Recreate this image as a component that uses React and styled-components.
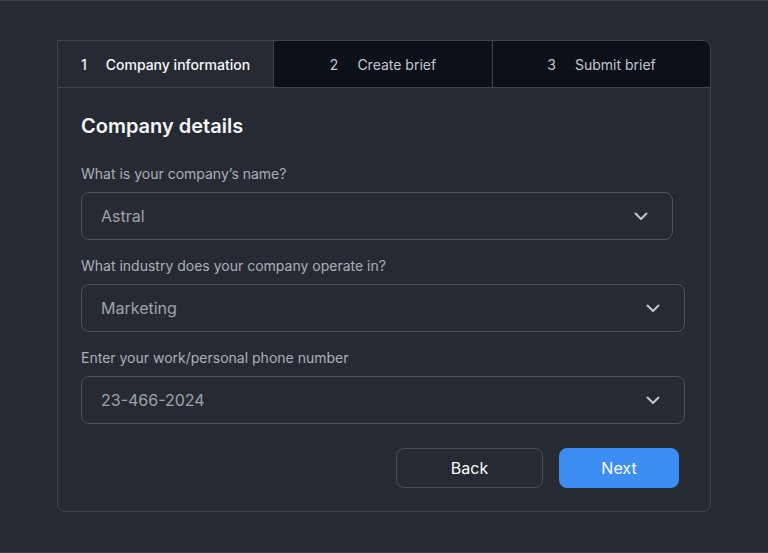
import React from "react";
import styled, { createGlobalStyle } from "styled-components";

const GlobalStyle = createGlobalStyle`
  html, body {
    margin: 0;
    padding: 0;
    background: #262b33;
  }
  body {
    font-family: Inter, "Noto Sans", sans-serif;
    -webkit-font-smoothing: antialiased;
  }
`;

const steps = [
  { n: 1, label: "Company information", active: true },
  { n: 2, label: "Create brief" },
  { n: 3, label: "Submit brief" },
];

const fields = [
  { label: "What is your company’s name?", value: "Astral", width: 592 },
  { label: "What industry does your company operate in?", value: "Marketing", width: 604 },
  { label: "Enter your work/personal phone number", value: "23-466-2024", width: 604 },
];

const Chevron = () => (
  <svg width="14" height="9" viewBox="0 0 14 9" fill="none">
    <path d="M1.5 1.5 7 7l5.5-5.5" stroke="#c3c7cd" strokeWidth="2" strokeLinecap="round" strokeLinejoin="round" />
  </svg>
);

const App = () => {
  return (
    <Screen>
      <GlobalStyle />
      <Card>
        <Tabs>
          {steps.map((s) => (
            <Tab key={s.n} $active={s.active}>
              <span>{s.n}</span>
              <span>{s.label}</span>
            </Tab>
          ))}
        </Tabs>
        <Body>
          <Title>Company details</Title>
          {fields.map((f, i) => (
            <Field key={f.label} $first={i === 0}>
              <Label>{f.label}</Label>
              <Select $width={f.width}>
                <span>{f.value}</span>
                <Chevron />
              </Select>
            </Field>
          ))}
          <Actions>
            <Button>Back</Button>
            <Button $primary>Next</Button>
          </Actions>
        </Body>
      </Card>
    </Screen>
  );
};

export default App;

const Screen = styled.div`
  box-sizing: border-box;
  height: 553px;
  border-top: 1px solid #3b4047;
  border-bottom: 1px solid #3b4047;
  padding: 39px 0 0 57px;
`;

const Card = styled.div`
  width: 654px;
  height: 472px;
  box-sizing: border-box;
  border: 1px solid #40464e;
  border-radius: 0 8px 8px 8px;
  overflow: hidden;
  display: flex;
  flex-direction: column;
`;

const Tabs = styled.div`
  display: grid;
  grid-template-columns: 215px 219px 1fr;
  height: 47px;
  border-bottom: 1px solid #40464e;
`;

const Tab = styled.div`
  display: flex;
  align-items: center;
  justify-content: center;
  gap: 19px;
  font-size: 14px;
  font-weight: ${(p) => (p.$active ? 500 : 400)};
  color: ${(p) => (p.$active ? "#f7f8f9" : "#c3c7cd")};
  background: ${(p) => (p.$active ? "#262b33" : "#0c1119")};
  & + & {
    border-left: 1px solid #40464e;
  }
`;

const Body = styled.div`
  padding: 23px 25px 23px 23px;
  display: flex;
  flex-direction: column;
`;

const Title = styled.h2`
  margin: 0;
  font-size: 20px;
  line-height: 30px;
  font-weight: 600;
  color: #f5f6f7;
`;

const Field = styled.div`
  display: flex;
  flex-direction: column;
  gap: 8px;
  margin-top: ${(p) => (p.$first ? "23px" : "16px")};
`;

const Label = styled.label`
  font-size: 14px;
  line-height: 20px;
  color: #abb0b7;
`;

const Select = styled.div`
  box-sizing: border-box;
  width: ${(p) => p.$width}px;
  height: 48px;
  border: 1px solid #4d535b;
  border-radius: 8px;
  padding: 0 24px 0 19px;
  display: flex;
  align-items: center;
  justify-content: space-between;
  font-size: 16px;
  color: #9ea3aa;
`;

const Actions = styled.div`
  display: flex;
  justify-content: flex-end;
  gap: 16px;
  margin-top: 24px;
  padding-right: 6px;
`;

const Button = styled.button`
  box-sizing: border-box;
  width: ${(p) => (p.$primary ? "120px" : "147px")};
  height: 40px;
  border-radius: 8px;
  border: 1px solid ${(p) => (p.$primary ? "#3d8ef3" : "#4a5058")};
  background: ${(p) => (p.$primary ? "#3d8ef3" : "transparent")};
  color: #ffffff;
  font-family: inherit;
  font-size: 16px;
  font-weight: 400;
`;
